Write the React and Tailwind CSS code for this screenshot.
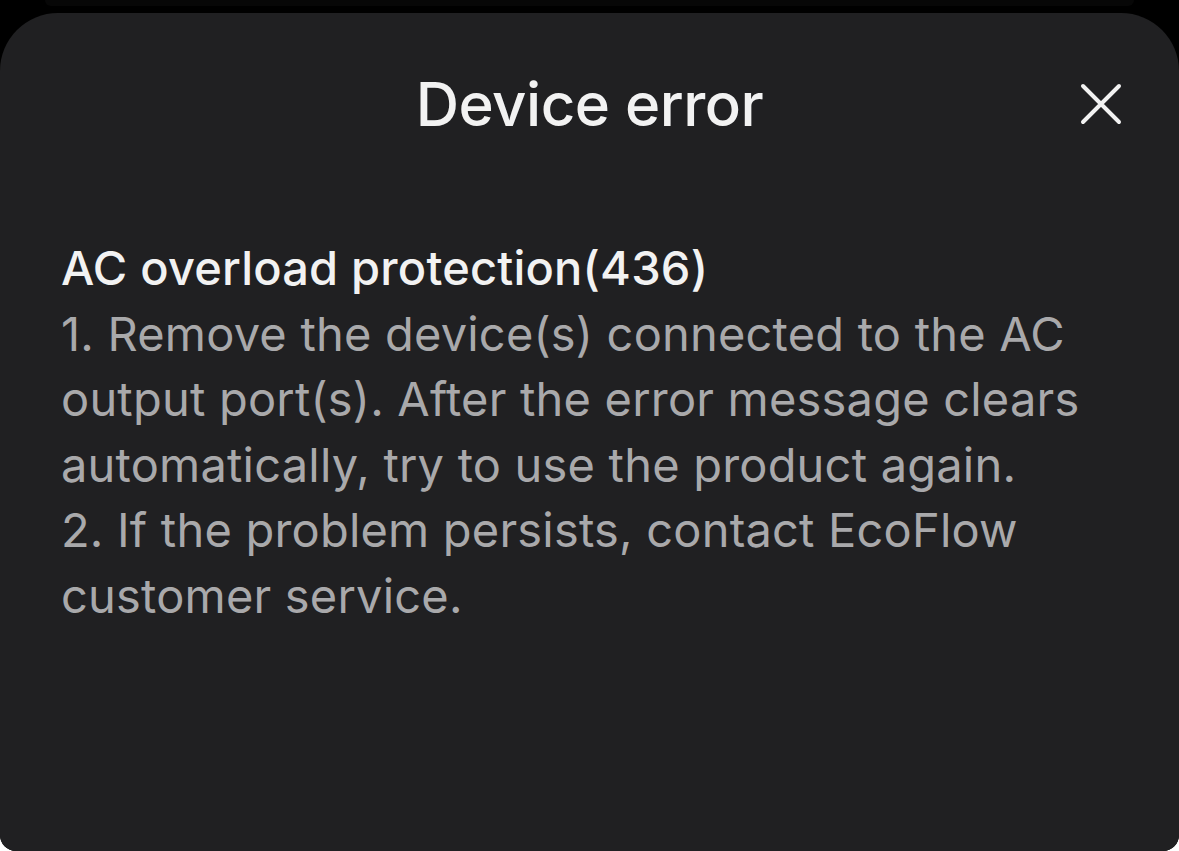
export default function App() {
  return (
    <div className="w-[1179px] h-[851px] bg-white overflow-hidden" style={{ fontFamily: "Inter, 'Noto Sans', sans-serif" }}>
      <div className="w-full h-full bg-black rounded-b-[16px] overflow-hidden flex flex-col">
        {/* sheet peeking behind */}
        <div className="h-[13px] shrink-0 px-[45px]">
          <div className="h-[6px] bg-[#070707] rounded-b-[40px]" />
        </div>
        <div className="flex-1 bg-[#202022] rounded-t-[58px] relative">
          <div className="h-[184px] flex items-center justify-center">
            <h1 className="text-[60px] font-medium text-[#f2f2f2] tracking-[-0.5px] leading-none -mt-[2px]">Device error</h1>
          </div>
          <button className="absolute right-[56px] top-[69px] w-[44px] h-[44px] flex items-center justify-center">
            <svg width="44" height="44" viewBox="0 0 44 44" fill="none" stroke="#f2f2f2" strokeWidth="4" strokeLinecap="round">
              <path d="M4 4L40 40M40 4L4 40" />
            </svg>
          </button>
          <div className="px-[61px] pt-[38px] text-[47px] leading-[65.5px] tracking-[0.2px]">
            <p className="text-[#f2f2f2] font-medium">AC overload protection(436)</p>
            <p className="text-[#a9a9ab]">
              1. Remove the device(s) connected to the AC output port(s). After the error message clears automatically, try to use the product again.
            </p>
            <p className="text-[#a9a9ab]">2. If the problem persists, contact EcoFlow customer service.</p>
          </div>
        </div>
      </div>
    </div>
  );
}
